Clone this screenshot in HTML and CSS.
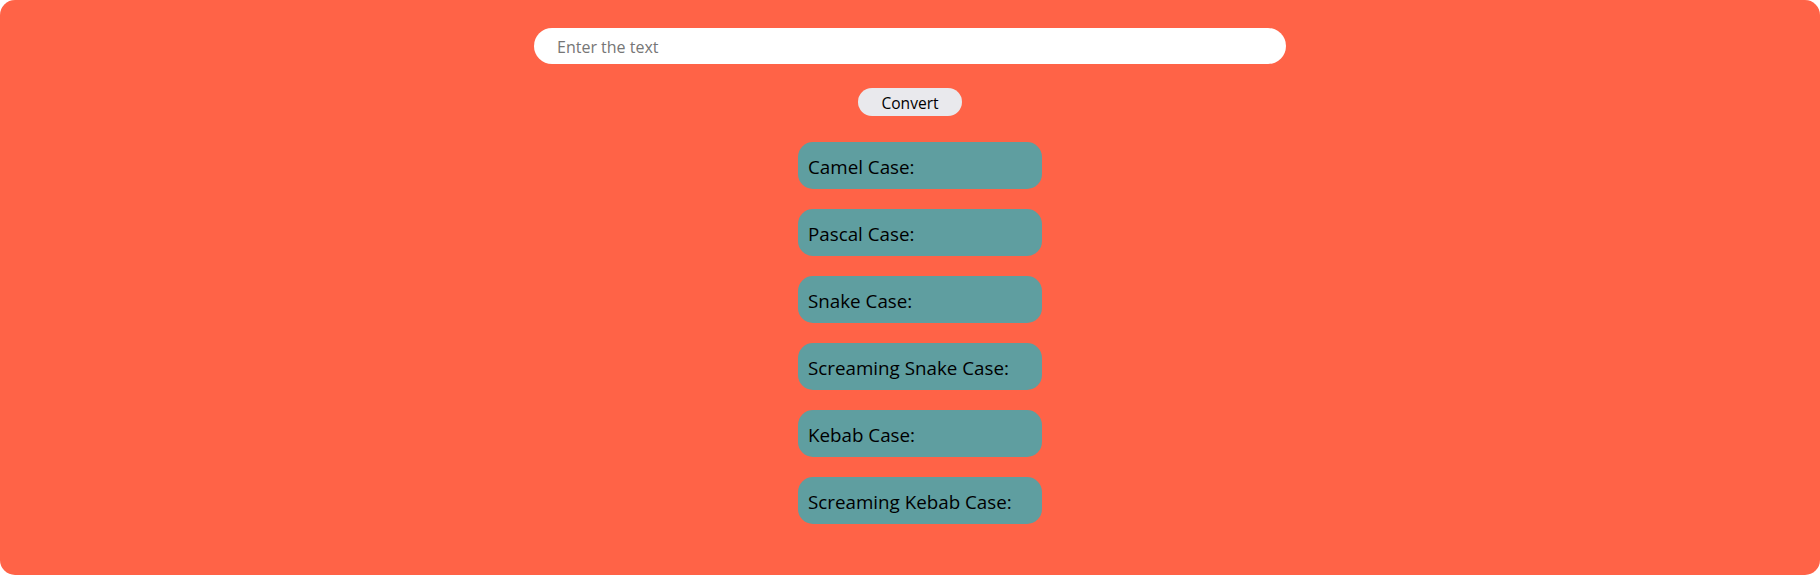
FILE: index.html
```html
<!DOCTYPE html>
<html lang="en">
<head>
<meta charset="utf-8">
<title>Case Converter</title>
<link rel="stylesheet" href="styles.css">
</head>
<body>
<div class="app">
  <input class="text-input" type="text" placeholder="Enter the text">
  <button class="convert-btn">Convert</button>
  <div class="results">
    <div class="card">Camel Case:</div>
    <div class="card">Pascal Case:</div>
    <div class="card">Snake Case:</div>
    <div class="card">Screaming Snake Case:</div>
    <div class="card">Kebab Case:</div>
    <div class="card">Screaming Kebab Case:</div>
  </div>
</div>
</body>
</html>
```

FILE: styles.css
```css
html, body {
  margin: 0;
  padding: 0;
  background: #ffffff;
}

.app {
  box-sizing: border-box;
  height: 575px;
  background: #ff6347;
  border-radius: 15px;
  display: flex;
  flex-direction: column;
  align-items: center;
  padding-top: 28px;
  font-family: "Open Sans", "Noto Sans", sans-serif;
}

.text-input {
  box-sizing: border-box;
  width: 752px;
  height: 36px;
  border: none;
  outline: none;
  border-radius: 18px;
  background: #ffffff;
  padding: 1px 23px 0;
  font-family: "Open Sans", "Noto Sans", sans-serif;
  font-size: 16px;
  color: #000;
}

.text-input::placeholder {
  color: #767676;
}

.convert-btn {
  box-sizing: border-box;
  margin-top: 24px;
  width: 104px;
  height: 28px;
  border: none;
  border-radius: 14px;
  background: #e9e9ed;
  font-family: "Open Sans", "Noto Sans", sans-serif;
  font-size: 15.6px;
  color: #000;
  padding: 2px 0 0;
}

.results {
  margin-top: 26px;
  padding-left: 20px;
  display: flex;
  flex-direction: column;
  gap: 20px;
}

.card {
  box-sizing: border-box;
  width: 244px;
  height: 47px;
  border-radius: 15px;
  background: #5f9ea0;
  padding: 2px 10px 0;
  display: flex;
  align-items: center;
  font-size: 18.8px;
  color: #000;
}
```
